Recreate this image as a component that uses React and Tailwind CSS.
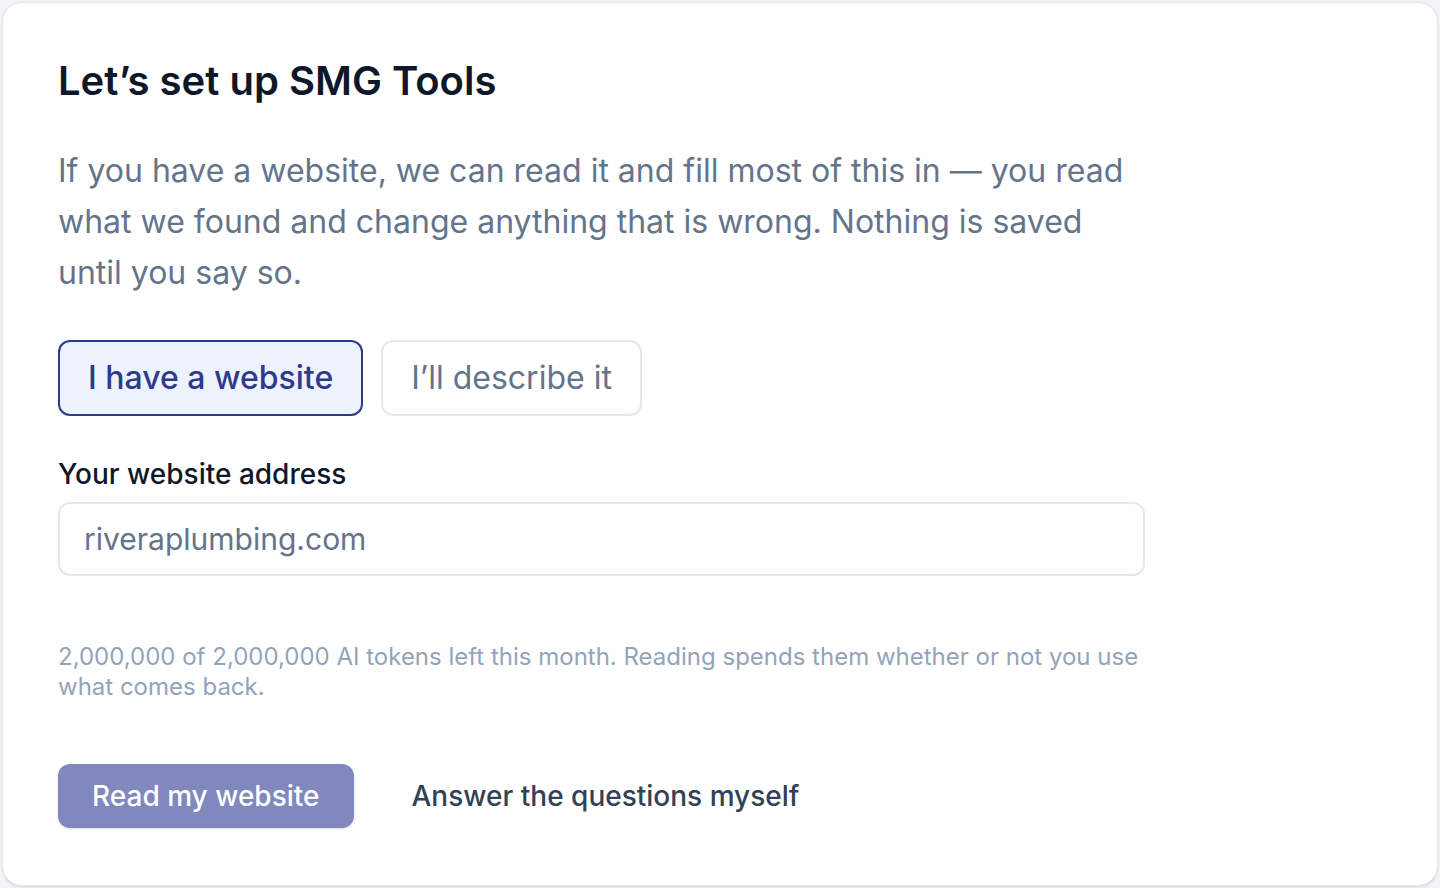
// Onboarding card: choose how to set up SMG Tools

import { useState } from "react"

const FONT = { fontFamily: "Inter, 'Noto Sans', sans-serif" }

function ModeToggle({ mode, setMode }) {
	const base =
		"h-[76px] rounded-[12px] border-2 px-[28px] text-[32px] leading-none transition-colors"
	return (
		<div className="flex gap-[18px]">
			<button
				type="button"
				onClick={() => setMode("site")}
				className={
					mode === "site"
						? `${base} border-[#2e3a8c] bg-[#eef2fd] font-medium text-[#2e3a8c]`
						: `${base} border-[#e2e8f0] bg-white text-[#64748b]`
				}
			>
				I have a website
			</button>
			<button
				type="button"
				onClick={() => setMode("describe")}
				className={
					mode === "describe"
						? `${base} border-[#2e3a8c] bg-[#eef2fd] font-medium text-[#2e3a8c]`
						: `${base} border-[#e2e8f0] bg-white text-[#64748b]`
				}
			>
				I’ll describe it
			</button>
		</div>
	)
}

export default function App() {
	const [mode, setMode] = useState("site")
	const [url, setUrl] = useState("")

	return (
		<div className="min-h-screen bg-[#f3f4f6] p-[2px]" style={FONT}>
			<div className="h-[884px] rounded-[20px] border border-[#e5e7eb] bg-white px-[55px] pt-[55px] shadow-sm">
				<div className="max-w-[1087px]">
					{/* ── Heading ── */}
					<h1 className="text-[40px] font-semibold leading-[46px] text-[#0f172a]">
						Let’s set up SMG Tools
					</h1>

					<p className="mt-[41px] text-[32px] leading-[51.2px] text-[#64748b]">
						If you have a website, we can read it and fill most of this in — you
						read what we found and change anything that is wrong. Nothing is
						saved until you say so.
					</p>

					<div className="mt-[41px]">
						<ModeToggle mode={mode} setMode={setMode} />
					</div>

					{/* ── Website field ── */}
					<label className="mt-[39px] block text-[28px] font-medium leading-[39px] text-[#0f172a]">
						Your website address
					</label>
					<input
						type="text"
						value={url}
						onChange={(e) => setUrl(e.target.value)}
						placeholder="riveraplumbing.com"
						className="mt-[8px] h-[74px] w-full rounded-[12px] border-2 border-[#e2e8f0] bg-white px-[24px] text-[30px] text-[#0f172a] outline-none placeholder:text-[#64748b]"
					/>

					<p className="mt-[66px] text-[24px] leading-[30px] text-[#94a3b8]">
						2,000,000 of 2,000,000 AI tokens left this month. Reading spends
						them whether or not you use what comes back.
					</p>

					{/* ── Actions ── */}
					<div className="mt-[62px] flex items-center gap-[24px]">
						<button
							type="button"
							disabled={!url}
							className="h-[64px] rounded-[12px] bg-[#8088be] px-[34px] text-[28px] font-medium text-white shadow-sm"
						>
							Read my website
						</button>
						<button
							type="button"
							onClick={() => setMode("describe")}
							className="h-[64px] px-[34px] text-[28px] font-medium text-[#334155]"
						>
							Answer the questions myself
						</button>
					</div>
				</div>
			</div>
		</div>
	)
}
